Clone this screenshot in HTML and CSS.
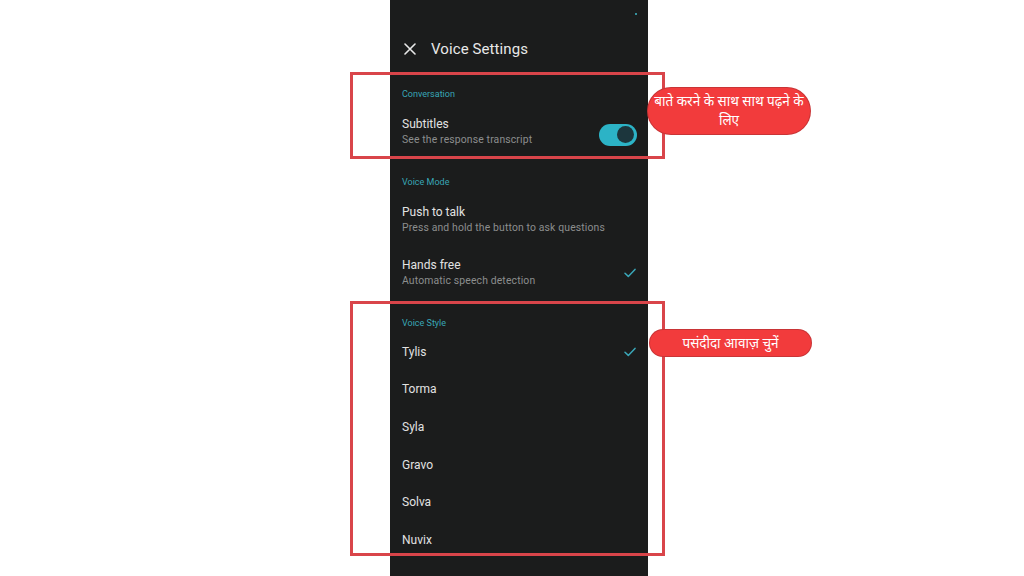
FILE: index.html
```html
<!DOCTYPE html>
<html lang="hi">
<head>
<meta charset="utf-8">
<title>Voice Settings</title>
<link rel="stylesheet" href="styles.css">
</head>
<body>
<div class="stage">
  <div class="phone">
    <div class="status"><span class="dot"></span></div>
    <div class="header">
      <svg class="close" width="12" height="12" viewBox="0 0 12 12"><path d="M1 1L11 11M11 1L1 11" stroke="#e8e8e8" stroke-width="1.6" stroke-linecap="round"/></svg>
      <span class="title">Voice Settings</span>
    </div>
    <div class="label first">Conversation</div>
    <div class="row">
      <div class="texts">
        <div class="name">Subtitles</div>
        <div class="sub">See the response transcript</div>
      </div>
      <div class="toggle"><span class="knob"></span></div>
    </div>
    <div class="label">Voice Mode</div>
    <div class="row">
      <div class="texts">
        <div class="name">Push to talk</div>
        <div class="sub">Press and hold the button to ask questions</div>
      </div>
    </div>
    <div class="row">
      <div class="texts">
        <div class="name">Hands free</div>
        <div class="sub">Automatic speech detection</div>
      </div>
      <svg class="check" width="12" height="10" viewBox="0 0 12 10"><path d="M1 5.2L4.3 8.4L11 1.4" fill="none" stroke="#3aa7b8" stroke-width="1.5" stroke-linecap="round" stroke-linejoin="round"/></svg>
    </div>
    <div class="label">Voice Style</div>
    <div class="item"><span>Tylis</span><svg class="check" width="12" height="10" viewBox="0 0 12 10"><path d="M1 5.2L4.3 8.4L11 1.4" fill="none" stroke="#3aa7b8" stroke-width="1.5" stroke-linecap="round" stroke-linejoin="round"/></svg></div>
    <div class="item"><span>Torma</span></div>
    <div class="item"><span>Syla</span></div>
    <div class="item"><span>Gravo</span></div>
    <div class="item"><span>Solva</span></div>
    <div class="item"><span>Nuvix</span></div>
  </div>

  <div class="mark mark-one"></div>
  <div class="mark mark-two"></div>
  <div class="bubble bubble-one">बाते करने के साथ साथ पढ़ने के लिए</div>
  <div class="bubble bubble-two">पसंदीदा आवाज़ चुनें</div>
</div>
</body>
</html>
```
FILE: styles.css
```css
html, body {
  margin: 0;
  padding: 0;
  background: #ffffff;
}
.stage {
  position: relative;
  width: 1024px;
  height: 576px;
  overflow: hidden;
  padding-left: 390px;
  box-sizing: border-box;
  font-family: Roboto, "Noto Sans", "Liberation Sans", sans-serif;
}
.phone {
  width: 258px;
  height: 576px;
  background: #1b1c1c;
  display: flex;
  flex-direction: column;
}
.status {
  height: 31px;
  position: relative;
}
.dot {
  position: absolute;
  left: 245px;
  top: 13px;
  width: 2px;
  height: 2px;
  border-radius: 50%;
  background: #3fb8c8;
}
.header {
  height: 36px;
  display: flex;
  align-items: center;
  padding-left: 14px;
  margin-bottom: 1px;
}
.close {
  display: block;
}
.title {
  margin-left: 15px;
  font-size: 15px;
  color: #e8e8e8;
  letter-spacing: 0.1px;
}
.label {
  padding: 15px 0 0 12px;
  height: 20px;
  line-height: 20px;
  font-size: 9px;
  color: #38a6b6;
}
.label.first {
  padding-top: 16px;
}
.row {
  height: 53px;
  box-sizing: border-box;
  padding: 12px 11px 0 12px;
  display: flex;
  align-items: center;
  justify-content: space-between;
}
.texts {
  align-self: flex-start;
}
.name {
  font-size: 12px;
  line-height: 16px;
  color: #e2e2e2;
}
.sub {
  font-size: 10.4px;
  line-height: 16px;
  color: #8c8e8e;
  letter-spacing: 0.14px;
}
.row .check {
  margin-right: 1px;
  margin-top: -10px;
}
.toggle {
  width: 38px;
  height: 22px;
  border-radius: 11px;
  background: #2cb3c6;
  position: relative;
  margin-top: -4px;
}
.knob {
  position: absolute;
  right: 3px;
  top: 2.5px;
  width: 17px;
  height: 17px;
  border-radius: 50%;
  background: #1c363d;
}
.item {
  height: 37.6px;
  display: flex;
  align-items: center;
  justify-content: space-between;
  padding: 0 12px 0 12px;
  font-size: 12px;
  color: #e2e2e2;
}
.mark {
  position: absolute;
  border: 3px solid #d9454a;
  box-sizing: border-box;
}
.mark-one {
  left: 350px;
  top: 72px;
  width: 315px;
  height: 87px;
}
.mark-two {
  left: 350px;
  top: 301px;
  width: 315px;
  height: 255px;
}
.bubble {
  position: absolute;
  background: #f23b3c;
  color: #ffffff;
  text-align: center;
  font-family: "Noto Sans", "Noto Sans Devanagari", "Liberation Sans", sans-serif;
  box-shadow: 0 0 0 1px #c93436;
}
.bubble-one {
  left: 648px;
  top: 88px;
  width: 162px;
  height: 46px;
  border-radius: 23px;
  font-size: 13.5px;
  line-height: 19px;
  padding: 4px 2px 0;
  box-sizing: border-box;
}
.bubble-two {
  left: 650px;
  top: 330px;
  width: 161px;
  height: 26px;
  border-radius: 13px;
  font-size: 13.5px;
  line-height: 26px;
}
```
